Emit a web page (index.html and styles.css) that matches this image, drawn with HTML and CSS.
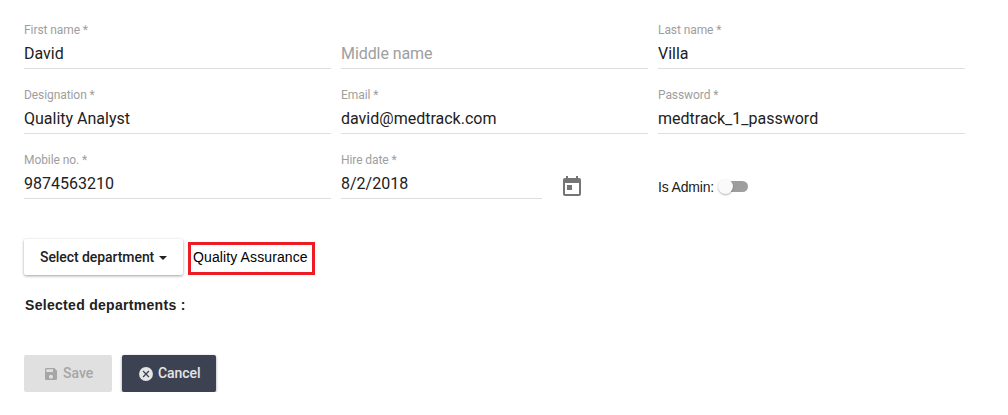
FILE: index.html
```html
<!DOCTYPE html>
<html lang="en">
<head>
<meta charset="utf-8">
<title>User details</title>
<link rel="stylesheet" href="styles.css">
</head>
<body>
<form class="user-form">
  <div class="fields">
    <div class="field"><label class="label">First name *</label><div class="value">David</div></div>
    <div class="field"><label class="label"></label><div class="value placeholder">Middle name</div></div>
    <div class="field"><label class="label">Last name *</label><div class="value">Villa</div></div>
    <div class="field"><label class="label">Designation *</label><div class="value">Quality Analyst</div></div>
    <div class="field"><label class="label">Email *</label><div class="value">david@medtrack.com</div></div>
    <div class="field"><label class="label">Password *</label><div class="value">medtrack_1_password</div></div>
    <div class="field"><label class="label">Mobile no. *</label><div class="value">9874563210</div></div>
    <div class="date-row">
      <div class="field date-field"><label class="label">Hire date *</label><div class="value">8/2/2018</div></div>
      <svg class="calendar" viewBox="0 0 24 24"><path d="M19 3h-1V1h-2v2H8V1H6v2H5c-1.11 0-1.99.9-1.99 2L3 19c0 1.1.89 2 2 2h14c1.1 0 2-.9 2-2V5c0-1.1-.9-2-2-2zm0 16H5V8h14v11zM7 10h5v5H7z"/></svg>
    </div>
    <div class="admin-row">
      <span class="admin-label">Is Admin:</span>
      <span class="toggle"><span class="thumb"></span></span>
    </div>
  </div>
  <div class="department-row">
    <button type="button" class="button select">Select department<span class="caret"></span></button>
    <span class="department">Quality Assurance</span>
  </div>
  <div class="selected">Selected departments :</div>
  <div class="actions">
    <button type="button" class="button save" disabled><svg class="icon" viewBox="0 0 24 24"><path d="M17 3H5c-1.11 0-2 .9-2 2v14c0 1.1.89 2 2 2h14c1.1 0 2-.9 2-2V7l-4-4zm-5 16c-1.66 0-3-1.34-3-3s1.34-3 3-3 3 1.34 3 3-1.34 3-3 3zm3-10H5V5h10v4z"/></svg><span>Save</span></button>
    <button type="button" class="button cancel"><svg class="icon" viewBox="0 0 24 24"><circle cx="12" cy="12" r="10.4"/><path class="cross" d="M7.6 7.6l8.8 8.8M16.4 7.6l-8.8 8.8"/></svg><span>Cancel</span></button>
  </div>
</form>
</body>
</html>
```
FILE: styles.css
```css
* { box-sizing: border-box; }
body {
  margin: 0;
  background: #fff;
  color: #212121;
  font-family: Roboto, "Liberation Sans", sans-serif;
}
.user-form { padding: 19px 43px 0 24px; }
.fields {
  display: grid;
  grid-template-columns: repeat(3, 307px);
  column-gap: 10px;
  row-gap: 15px;
}
.field {
  height: 50px;
  border-bottom: 1px solid #dedede;
}
.label {
  display: block;
  height: 22px;
  font-size: 12px;
  line-height: 22px;
  letter-spacing: -.08px;
  color: #9e9e9e;
}
.value {
  padding-top: 1px;
  font-size: 16px;
  line-height: 24px;
}
.placeholder {
  color: #9e9e9e;
  letter-spacing: -.08px;
}
.date-row { display: flex; }
.date-field { width: 201px; }
.calendar {
  width: 24px;
  height: 24px;
  margin: 26px 0 0 18px;
  fill: #757575;
}
.admin-row {
  display: flex;
  align-items: center;
  height: 24px;
  margin-top: 25px;
}
.admin-label {
  width: 62px;
  padding-top: 1px;
  font: 14px/20px "Liberation Sans", Arial, sans-serif;
  letter-spacing: -.17px;
}
.toggle {
  display: flex;
  align-items: center;
  width: 28px;
  height: 11px;
  border-radius: 6px;
  background: #9e9e9e;
}
.thumb {
  flex: none;
  width: 15px;
  height: 15px;
  margin-left: -2px;
  border-radius: 50%;
  background: #fafafa;
  box-shadow: 0 1px 2px rgba(0, 0, 0, .3);
}
.department-row {
  display: flex;
  gap: 5px;
  height: 36px;
  margin-top: 41px;
}
.fields { height: 180px; margin-bottom: -1px; }
.button {
  display: flex;
  align-items: center;
  padding: 0;
  border: 0;
  border-radius: 2px;
  font: 500 14px/36px Roboto, sans-serif;
}
.select {
  width: 159px;
  height: 36px;
  padding-left: 16px;
  background: #fff;
  color: #212121;
  letter-spacing: -.07px;
  box-shadow: 0 1px 3px rgba(0, 0, 0, .38);
}
.caret {
  margin: 2px 0 0 5px;
  border: 4px solid transparent;
  border-top-color: #212121;
  border-bottom: 0;
}
.department {
  width: 127px;
  height: 33px;
  margin-top: 3px;
  padding-left: 2px;
  border: 3px solid #ed1c24;
  color: #000;
  font: 14px/25px "Liberation Sans", Arial, sans-serif;
  letter-spacing: .11px;
}
.selected {
  margin-top: 20px;
  padding-left: 1px;
  font: bold 14px/20px "Liberation Sans", Arial, sans-serif;
  letter-spacing: .3px;
}
.actions {
  display: flex;
  gap: 10px;
  margin-top: 40px;
}
.actions .button {
  height: 37px;
  padding-bottom: 1px;
}
.icon {
  width: 16px;
  height: 16px;
  margin: 2px 4px 0 0;
  fill: currentColor;
}
.cross {
  fill: none;
  stroke: #3c4252;
  stroke-width: 1.9;
}
.save {
  width: 88px;
  padding-left: 19px;
  background: #e0e0e0;
  color: #a6a6a6;
}
.cancel {
  width: 94px;
  padding-left: 16px;
  background: #3c4252;
  color: #e4e5e7;
  letter-spacing: -.08px;
  box-shadow: 0 1px 3px rgba(0, 0, 0, .4);
}
```
